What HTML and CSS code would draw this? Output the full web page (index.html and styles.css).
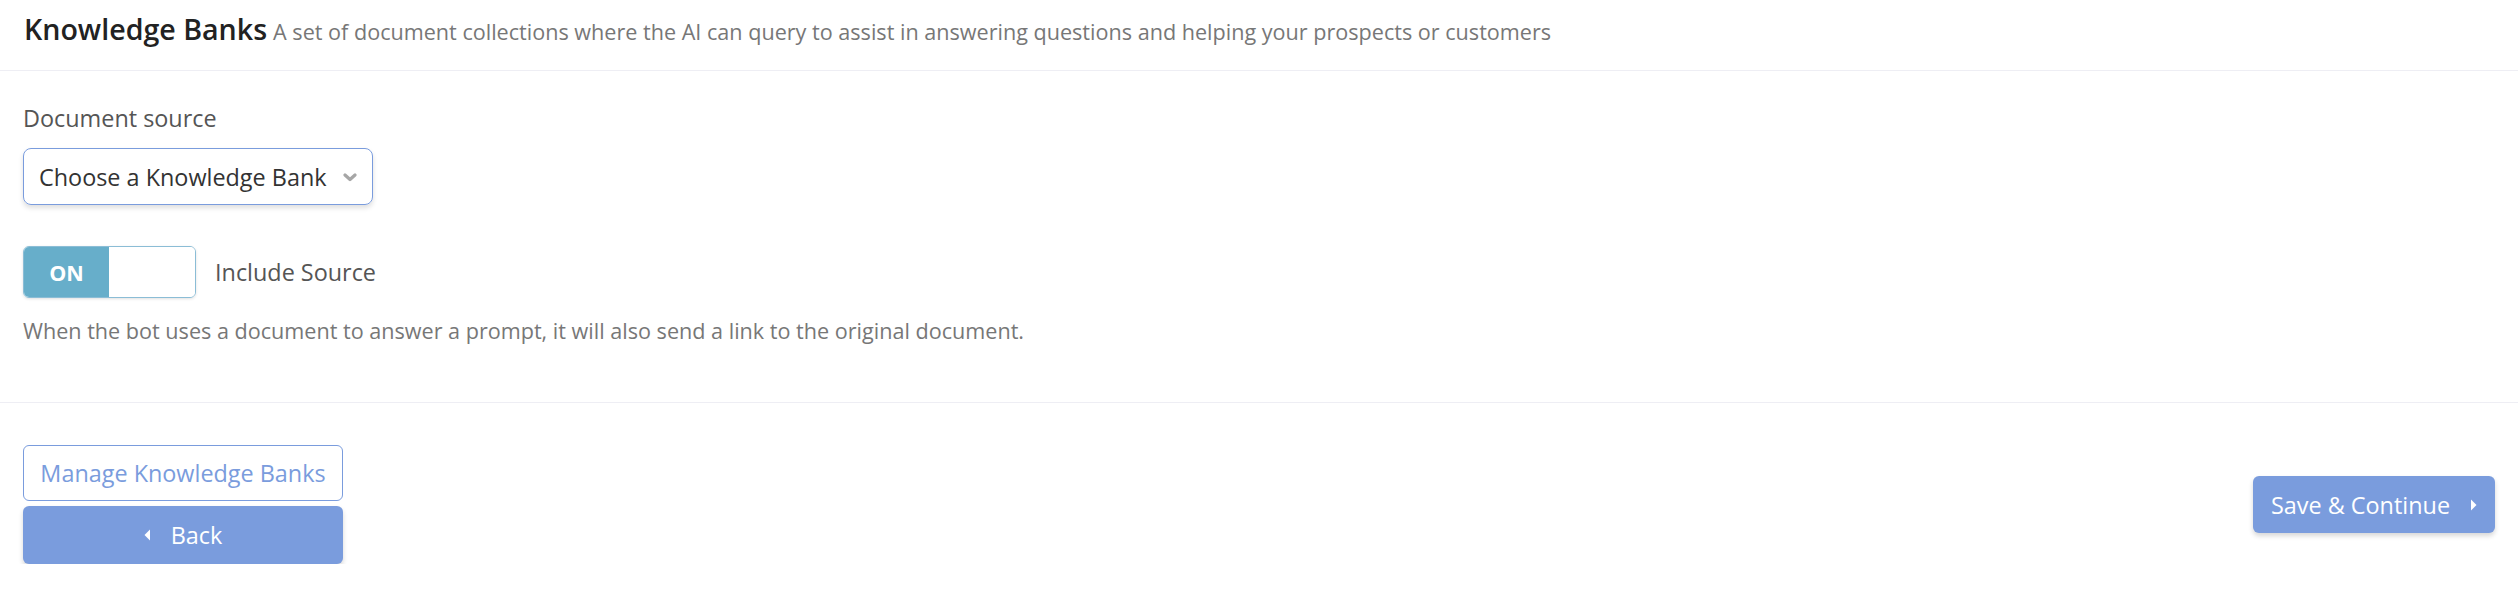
FILE: index.html
```html
<!DOCTYPE html>
<html>
<head>
<meta charset="utf-8">
<link rel="stylesheet" href="styles.css">
</head>
<body>
<div class="page">
  <header class="header">
    <h1 class="title">Knowledge Banks</h1>
    <span class="subtitle">A set of document collections where the AI can query to assist in answering questions and helping your prospects or customers</span>
  </header>
  <section class="content">
    <label class="label">Document source</label>
    <div class="select">
      <span class="select-text">Choose a Knowledge Bank</span>
      <svg class="chevron" width="14" height="9" viewBox="0 0 14 9"><path d="M2 2 L7 6.5 L12 2" fill="none" stroke="#a6a6a6" stroke-width="3.2" stroke-linecap="round" stroke-linejoin="round"/></svg>
    </div>
    <div class="toggle-row">
      <div class="toggle">
        <span class="toggle-on">ON</span>
        <span class="toggle-off"></span>
      </div>
      <span class="toggle-label">Include Source</span>
    </div>
    <p class="help">When the bot uses a document to answer a prompt, it will also send a link to the original document.</p>
  </section>
  <footer class="footer">
    <div class="left-buttons">
      <button class="btn btn-outline">Manage Knowledge Banks</button>
      <button class="btn btn-primary btn-back"><svg width="7" height="12" viewBox="0 0 7 12"><path d="M6 0.5 L0.5 6 L6 11.5 Z" fill="#fff"/></svg><span>Back</span></button>
    </div>
    <button class="btn btn-primary btn-save"><span>Save &amp; Continue</span><svg width="7" height="12" viewBox="0 0 7 12"><path d="M1 0.5 L6.5 6 L1 11.5 Z" fill="#fff"/></svg></button>
  </footer>
</div>
</body>
</html>
```
FILE: styles.css
```css
html, body {
  margin: 0;
  padding: 0;
  background: #ffffff;
}
body {
  font-family: "Open Sans", "Liberation Sans", sans-serif;
  color: #333;
}
.page {
  width: 2518px;
}
.header {
  height: 71px;
  box-sizing: border-box;
  border-bottom: 1px solid #eeeef4;
  padding: 9px 24px 0;
  display: flex;
  align-items: baseline;
}
.title {
  margin: 0;
  font-size: 28.6px;
  font-weight: 600;
  color: #222;
  line-height: 40px;
}
.subtitle {
  margin-left: 6px;
  font-size: 21.6px;
  color: #777;
  line-height: 40px;
}
.content {
  padding: 31px 23px 0;
  height: 332px;
  box-sizing: border-box;
  border-bottom: 1px solid #eeeef4;
}
.label {
  display: block;
  font-size: 23.4px;
  color: #555;
  line-height: 32px;
}
.select {
  margin-top: 14px;
  width: 350px;
  height: 57px;
  box-sizing: border-box;
  border: 1px solid #7a9cdd;
  border-radius: 8px;
  box-shadow: 0 3px 5px rgba(0,0,0,0.13);
  display: flex;
  align-items: center;
  justify-content: space-between;
  padding: 0 15px 0 15px;
}
.select-text {
  font-size: 23.4px;
  color: #333;
}
.chevron {
  margin-top: 2px;
}
.toggle-row {
  margin-top: 41px;
  display: flex;
  align-items: center;
}
.toggle {
  width: 173px;
  height: 52px;
  box-sizing: border-box;
  border: 1px solid #8bbdd6;
  border-radius: 6px;
  overflow: hidden;
  display: flex;
  box-shadow: 0 1px 3px rgba(0,0,0,0.12);
}
.toggle-on {
  width: 85px;
  background: #67aeca;
  color: #fff;
  font-weight: 700;
  font-size: 21.5px;
  display: flex;
  align-items: center;
  justify-content: center;
}
.toggle-off {
  flex: 1;
  background: #fff;
}
.toggle-label {
  margin-left: 19px;
  font-size: 23.4px;
  color: #555;
}
.help {
  margin: 18px 0 0;
  font-size: 21.6px;
  line-height: 30px;
  color: #777;
}
.footer {
  padding: 42px 23px 0;
  display: flex;
  justify-content: space-between;
  align-items: center;
}
.left-buttons {
  display: flex;
  flex-direction: column;
  gap: 5px;
  width: 320px;
}
.btn {
  font-family: "Open Sans", "Liberation Sans", sans-serif;
  font-size: 23.4px;
  border-radius: 6px;
  box-sizing: border-box;
  cursor: pointer;
  display: flex;
  align-items: center;
  justify-content: center;
}
.btn-outline {
  height: 56px;
  background: #fff;
  border: 1px solid #7a9cdd;
  color: #7a9cdd;
}
.btn-primary {
  background: #7a9cdd;
  border: none;
  color: #fff;
  box-shadow: 0 3px 5px rgba(0,0,0,0.16);
}
.btn-back {
  height: 58px;
  gap: 20px;
}
.btn-save {
  height: 57px;
  width: 242px;
  gap: 20px;
}
```
